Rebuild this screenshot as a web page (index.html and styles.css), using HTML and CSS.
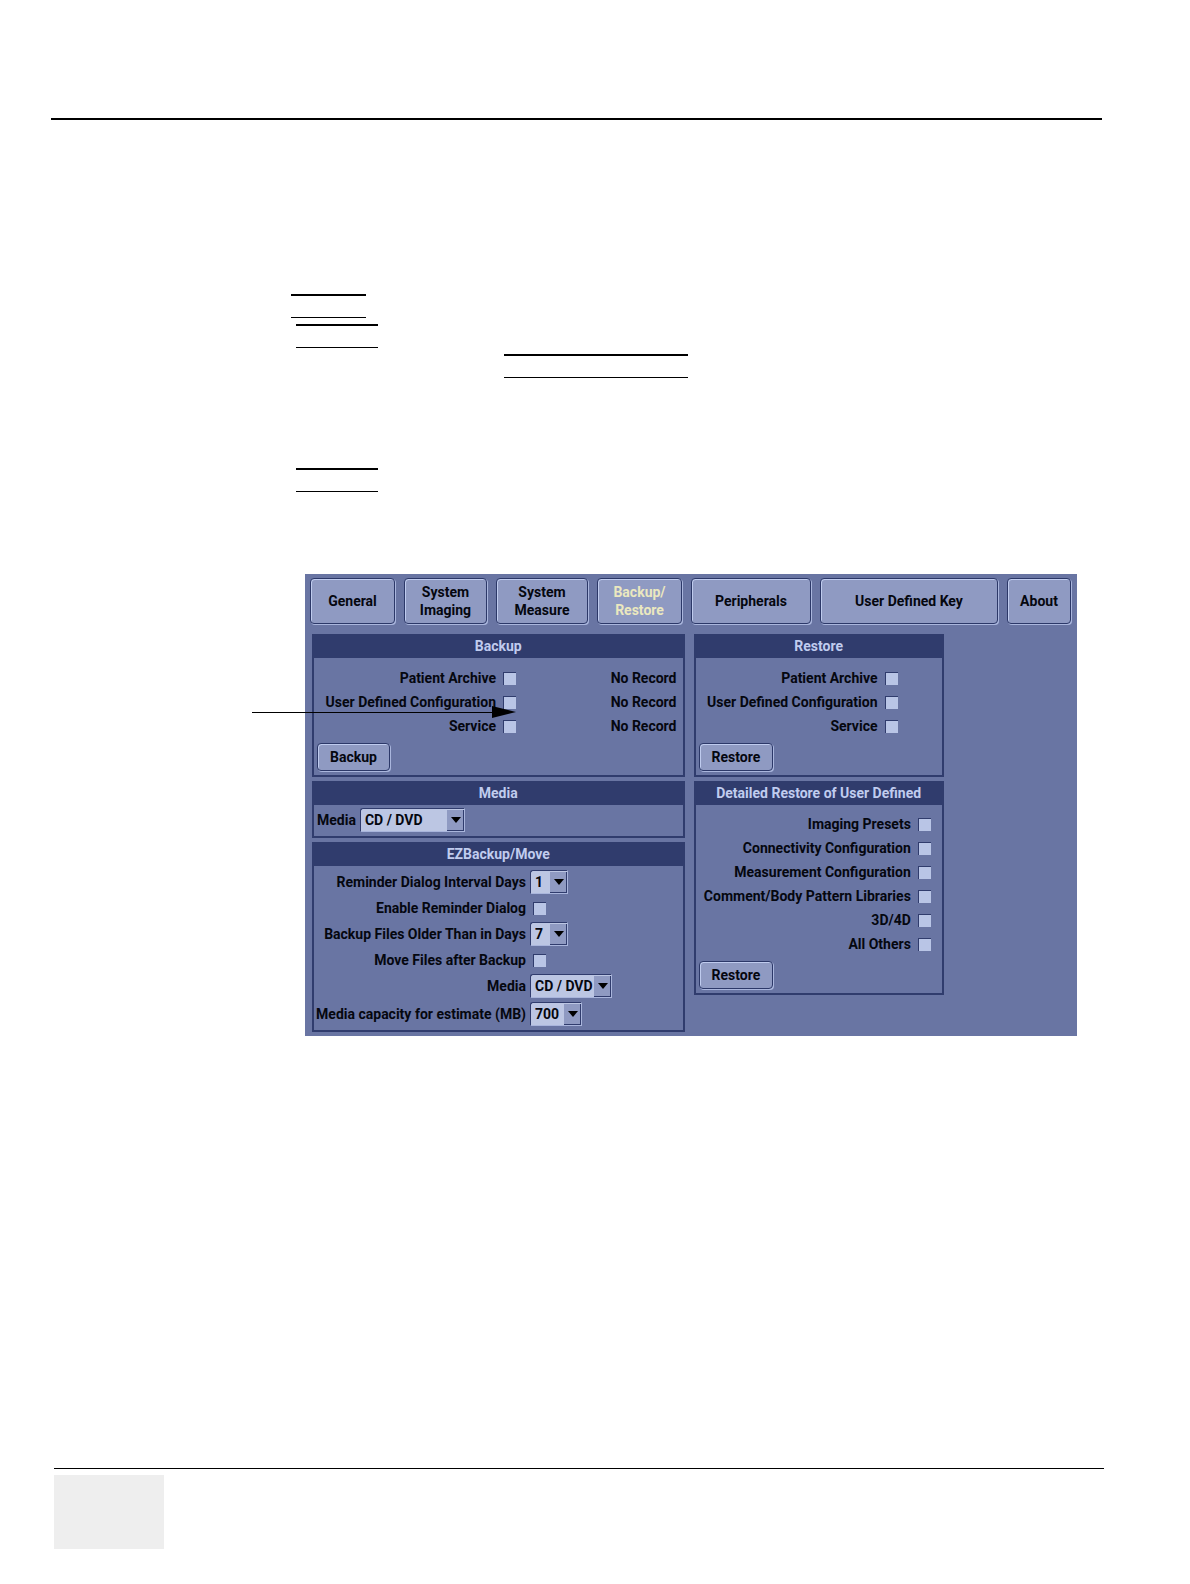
FILE: index.html
```html
<!DOCTYPE html>
<html lang="en">
<head>
<meta charset="UTF-8" />
<meta name="viewport" content="width=device-width, initial-scale=1" />
<title>Backup/Restore</title>
<link rel="stylesheet" href="styles.css">
</head>
<body>

<header class="page-head"></header>

<main class="page-body">

  <!-- Ruled key boxes -->
  <div class="key-rules">
    <div class="key-box key-first"></div>
    <div class="key-box key-short"></div>
    <div class="key-box key-long"></div>
    <div class="key-box key-short key-last"></div>
  </div>

  <section class="console">

    <!-- Callout arrow -->
    <svg class="callout" width="264" height="12" viewBox="0 0 264 12" aria-hidden="true">
      <path d="M0 6H242" stroke="#000" stroke-width="1" shape-rendering="crispEdges" />
      <path d="M240 0L264 6L240 12Z" fill="#000" />
    </svg>

    <nav class="tabs">
      <button type="button" class="btn">General</button>
      <button type="button" class="btn">System<br>Imaging</button>
      <button type="button" class="btn">System<br>Measure</button>
      <button type="button" class="btn active">Backup/<br>Restore</button>
      <button type="button" class="btn">Peripherals</button>
      <button type="button" class="btn">User Defined Key</button>
      <button type="button" class="btn">About</button>
    </nav>

    <div class="columns">

      <div class="column">
        <section class="group">
          <h2>Backup</h2>
          <div class="checks">
            <div class="check-row">
              <label for="bPatient">Patient Archive</label>
              <input type="checkbox" id="bPatient">
              <span class="status">No Record</span>
            </div>
            <div class="check-row">
              <label for="bConfig">User Defined Configuration</label>
              <input type="checkbox" id="bConfig">
              <span class="status">No Record</span>
            </div>
            <div class="check-row">
              <label for="bService">Service</label>
              <input type="checkbox" id="bService">
              <span class="status">No Record</span>
            </div>
          </div>
          <button type="button" class="btn action">Backup</button>
        </section>

        <section class="group">
          <h2>Media</h2>
          <div class="media-row">
            <label for="media">Media</label>
            <span class="drop drop-wide"><select id="media"><option>CD / DVD</option></select></span>
          </div>
        </section>

        <section class="group">
          <h2>EZBackup/Move</h2>
          <div class="ez-form">
            <label for="interval">Reminder Dialog Interval Days</label>
            <span class="drop drop-day"><select id="interval"><option>1</option></select></span>
            <label for="enable">Enable Reminder Dialog</label>
            <input type="checkbox" id="enable">
            <label for="older">Backup Files Older Than in Days</label>
            <span class="drop drop-day"><select id="older"><option>7</option></select></span>
            <label for="move">Move Files after Backup</label>
            <input type="checkbox" id="move">
            <label for="ezMedia">Media</label>
            <span class="drop drop-media"><select id="ezMedia"><option>CD / DVD</option></select></span>
            <label for="capacity">Media capacity for estimate (MB)</label>
            <span class="drop drop-size"><select id="capacity"><option>700</option></select></span>
          </div>
        </section>
      </div>

      <div class="column">
        <section class="group">
          <h2>Restore</h2>
          <div class="checks">
            <div class="check-row">
              <label for="rPatient">Patient Archive</label>
              <input type="checkbox" id="rPatient">
            </div>
            <div class="check-row">
              <label for="rConfig">User Defined Configuration</label>
              <input type="checkbox" id="rConfig">
            </div>
            <div class="check-row">
              <label for="rService">Service</label>
              <input type="checkbox" id="rService">
            </div>
          </div>
          <button type="button" class="btn action">Restore</button>
        </section>

        <section class="group">
          <h2>Detailed Restore of User Defined</h2>
          <div class="checks detailed">
            <div class="check-row">
              <label for="dImaging">Imaging Presets</label>
              <input type="checkbox" id="dImaging">
            </div>
            <div class="check-row">
              <label for="dConnect">Connectivity Configuration</label>
              <input type="checkbox" id="dConnect">
            </div>
            <div class="check-row">
              <label for="dMeasure">Measurement Configuration</label>
              <input type="checkbox" id="dMeasure">
            </div>
            <div class="check-row">
              <label for="dComment">Comment/Body Pattern Libraries</label>
              <input type="checkbox" id="dComment">
            </div>
            <div class="check-row">
              <label for="d3d">3D/4D</label>
              <input type="checkbox" id="d3d">
            </div>
            <div class="check-row">
              <label for="dOthers">All Others</label>
              <input type="checkbox" id="dOthers">
            </div>
          </div>
          <button type="button" class="btn action">Restore</button>
        </section>
      </div>

    </div>
  </section>
</main>

<footer class="page-foot">
  <div class="page-number"></div>
</footer>

</body>
</html>
```

FILE: styles.css
```css
* {
  box-sizing: border-box;
}

body {
  margin: 0;
  background: #fff;
  color: #05070f;
  font: bold 14px/18px Roboto, "Liberation Sans", sans-serif;
}

.page-head {
  margin: 0 88px 0 51px;
  padding-top: 118px;
  border-bottom: 2px solid #000;
}

.page-body {
  padding: 174px 113px 0 291px;
}

/* Ruled key boxes */
.key-box {
  height: 24px;
  margin: 0 0 6px 5px;
  border-top: 2px solid #000;
  border-bottom: 1px solid #000;
}

.key-first {
  width: 75px;
  margin-left: 0;
}

.key-short {
  width: 82px;
}

.key-long {
  width: 184px;
  margin-left: 213px;
}

.key-last {
  margin-top: 90px;
}

/* Console screen */
.console {
  position: relative;
  margin: 82px 0 0 14px;
  padding: 4px 6px 4px 5px;
  background: #6975a3;
}

.callout {
  position: absolute;
  left: -53px;
  top: 132px;
  z-index: 1;
}

.btn {
  padding: 0;
  border: 1px solid #2c3868;
  border-radius: 4px;
  background: #8f9ac2;
  box-shadow: inset 1px 1px 0 #bfcbee, 1px 1px 0 #aab6dd;
  color: inherit;
  font: inherit;
}

.btn.active {
  color: #ebe8bf;
}

.tabs {
  display: grid;
  grid-template-columns: 85fr 83fr 92fr 85fr 120fr 178fr 64fr;
  gap: 9px;
  height: 46px;
}

.columns {
  display: grid;
  grid-template-columns: 372fr 250fr 118fr;
  gap: 9px;
  margin: 10px 0 0 2px;
}

.column {
  display: flex;
  flex-direction: column;
  gap: 4px;
}

.group {
  border: 2px solid #303c6d;
}

.group h2 {
  height: 22px;
  margin: 0;
  background: #303c6d;
  color: #c0ccef;
  font: inherit;
  line-height: 20px;
  text-align: center;
}

.checks {
  padding: 8px 6px 5px;
}

.check-row {
  display: grid;
  grid-template-columns: 176px 13px 1fr;
  column-gap: 7px;
  align-items: center;
  height: 24px;
}

.checks.detailed {
  padding-top: 7px;
}

.detailed .check-row {
  grid-template-columns: 1fr 13px;
  padding-right: 5px;
}

label {
  text-align: right;
  white-space: nowrap;
}

/* Right-aligned labels may run into the left padding */
.check-row label,
.ez-form label {
  display: flex;
  justify-content: flex-end;
}

.status {
  text-align: right;
}

input[type="checkbox"] {
  appearance: none;
  width: 13px;
  height: 13px;
  margin: 0;
  border: solid #303c6d;
  border-width: 1px 0 0 1px;
  background: #b9c5e6;
}

.action {
  display: block;
  height: 28px;
  margin: 0 0 4px 3px;
  padding: 0 12px;
}

/* Drop-downs */
.drop {
  display: block;
  position: relative;
  height: 24px;
}

.drop select {
  appearance: none;
  width: 100%;
  height: 100%;
  padding: 0 0 0 4px;
  border: 1px solid #303c6d;
  border-right-color: #a9b5dc;
  border-bottom-color: #a9b5dc;
  border-radius: 3px 0 0 0;
  background: #bcc6e3;
  color: inherit;
  font: inherit;
}

.drop::before {
  content: "";
  position: absolute;
  top: 2px;
  right: 1px;
  bottom: 1px;
  width: 16px;
  border: solid #303c6d;
  border-width: 0 1px 1px 0;
  background: #8f9ac2;
  pointer-events: none;
}

.drop::after {
  content: "";
  position: absolute;
  top: 9px;
  right: 4px;
  border: solid transparent;
  border-width: 6px 5px 0;
  border-top-color: #000;
  pointer-events: none;
}

.drop-wide {
  width: 105px;
}

.drop-day {
  width: 38px;
}

.drop-media {
  width: 82px;
}

.drop-size {
  width: 52px;
}

.media-row {
  display: flex;
  align-items: center;
  gap: 4px;
  padding: 3px 3px 4px;
}

.ez-form {
  display: grid;
  grid-template-columns: 209px 1fr;
  grid-template-rows: repeat(5, 26px) 30px;
  column-gap: 4px;
  align-items: center;
  padding: 3px 3px 1px;
}

.ez-form input {
  margin-left: 3px;
}

/* Page footer */
.page-foot {
  margin: 432px 86px 0 54px;
  padding: 6px 0 35px;
  border-top: 1px solid #000;
}

.page-number {
  width: 110px;
  height: 74px;
  background: #eee;
}
```
